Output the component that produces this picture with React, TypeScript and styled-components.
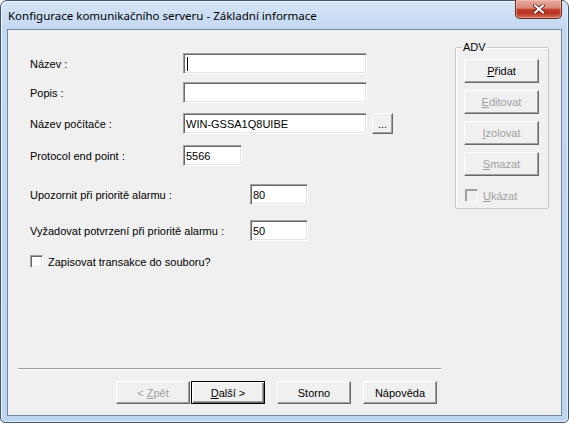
import styled, { createGlobalStyle } from 'styled-components';

const GlobalStyle = createGlobalStyle`
  html, body {
    margin: 0;
    padding: 0;
    background: #ffffff;
  }
  body {
    font-family: "Liberation Sans", Arial, sans-serif;
  }
`;

const Window = styled.div`
  box-sizing: border-box;
  width: 569px;
  height: 423px;
  display: flex;
  flex-direction: column;
  padding: 0 6px 6px 6px;
  border: 1px solid #3e5674;
  border-radius: 7px 7px 5px 5px;
  background: linear-gradient(to bottom, #d6e5f7 0px, #c3d8f1 28px, #bcd4ef 100%);
  box-shadow: inset 1px 1px 0 #eef5fc, inset -1px -1px 0 #e3eefa;
`;

const TitleBar = styled.div`
  height: 28px;
  display: flex;
  align-items: flex-start;
  justify-content: space-between;
`;

const Title = styled.div`
  margin: 7px 0 0 1px;
  font-family: "Noto Sans", "Open Sans", sans-serif;
  font-size: 11.5px;
  line-height: 15px;
  color: #000;
`;

const CloseButton = styled.div`
  width: 45px;
  height: 18px;
  margin: -1px 0 0 0;
  display: flex;
  align-items: center;
  justify-content: center;
  border: 1px solid #6a2a22;
  border-top: none;
  border-radius: 0 0 5px 5px;
  background: linear-gradient(to bottom, #e7ab9f 0%, #d98877 45%, #c2412e 52%, #b8321f 72%, #d2705a 100%);
  box-shadow: inset 0 0 0 1px rgba(255, 210, 200, 0.45);
`;

const Client = styled.div`
  flex: 1;
  display: flex;
  flex-direction: column;
  border: 1px solid #72869f;
  background: #f0f0f0;
  font-size: 11px;
  color: #000;
`;

const Content = styled.div`
  display: flex;
  align-items: flex-start;
`;

const Form = styled.div`
  flex: 1;
  display: flex;
  flex-direction: column;
  padding: 23px 0 0 22px;
`;

const Row = styled.div<{ $gap?: number }>`
  display: flex;
  align-items: center;
  height: 21px;
  margin-top: ${(p) => p.$gap ?? 0}px;
`;

const Label = styled.span<{ $width: number }>`
  width: ${(p) => p.$width}px;
  flex: none;
  white-space: nowrap;
`;

const TextBox = styled.div<{ $width: number }>`
  box-sizing: border-box;
  width: ${(p) => p.$width}px;
  height: 21px;
  display: flex;
  align-items: center;
  padding-left: 2px;
  background: #fff;
  border: 1px solid;
  border-color: #a0a0a0 #ffffff #ffffff #a0a0a0;
  box-shadow: inset 1px 1px 0 #696969, inset -1px -1px 0 #e3e3e3;
  white-space: nowrap;
`;

const Caret = styled.span`
  display: inline-block;
  width: 1px;
  height: 14px;
  margin-left: 1px;
  background: #000;
`;

const Button = styled.div<{ $width?: number; $height?: number; $disabled?: boolean; $default?: boolean }>`
  box-sizing: border-box;
  width: ${(p) => p.$width ?? 75}px;
  height: ${(p) => p.$height ?? 24}px;
  flex: none;
  display: flex;
  align-items: center;
  justify-content: center;
  background: #f0f0f0;
  color: ${(p) => (p.$disabled ? '#a0a0a0' : '#000')};
  border: 1px solid;
  border-color: ${(p) => (p.$default ? '#000' : '#ffffff #696969 #696969 #ffffff')};
  box-shadow: ${(p) =>
    p.$default
      ? 'inset 1px 1px 0 #fff, inset -1px -1px 0 #696969, inset -2px -2px 0 #a0a0a0'
      : 'inset -1px -1px 0 #a0a0a0, inset 1px 1px 0 #f0f0f0'};
  white-space: nowrap;
`;

const CheckRow = styled.label<{ $gap?: number; $disabled?: boolean }>`
  display: flex;
  align-items: center;
  gap: 5px;
  height: 13px;
  margin-top: ${(p) => p.$gap ?? 0}px;
  color: ${(p) => (p.$disabled ? '#a0a0a0' : '#000')};
`;

const CheckBox = styled.span<{ $disabled?: boolean }>`
  box-sizing: border-box;
  width: 13px;
  height: 13px;
  flex: none;
  background: ${(p) => (p.$disabled ? '#f0f0f0' : '#fff')};
  border: 1px solid;
  border-color: #a0a0a0 #ffffff #ffffff #a0a0a0;
  box-shadow: ${(p) => (p.$disabled ? 'inset 1px 1px 0 #a0a0a0' : 'inset 1px 1px 0 #696969, inset -1px -1px 0 #e3e3e3')};
`;

const GroupBox = styled.fieldset`
  box-sizing: border-box;
  width: 94px;
  height: 168px;
  margin: 11px 12px 0 0;
  padding: 5px 8px 0 8px;
  border: 1px solid #c8c8c8;
  border-radius: 2px;
  box-shadow: inset 1px 1px 0 #fff;
  display: flex;
  flex-direction: column;
  gap: 7px;
`;

const Legend = styled.legend`
  padding: 0 1px;
  margin-left: -2px;
  line-height: 13px;
  font-size: 11px;
`;

const Separator = styled.div`
  margin: auto 0 0 10px;
  width: 423px;
  border-top: 1px solid #a0a0a0;
  border-bottom: 1px solid #ffffff;
`;

const ButtonBar = styled.div`
  display: flex;
  gap: 12px;
  padding: 11px 0 11px 108px;
`;

const WizardPair = styled.div`
  display: flex;
  gap: 1px;
`;

export default function App() {
  return (
    <>
      <GlobalStyle />
      <Window>
        <TitleBar>
          <Title>Konfigurace komunikačního serveru - Základní informace</Title>
          <CloseButton>
            <svg width="12" height="10" viewBox="0 0 12 10">
              <path d="M2 1.5 L10 8.5 M10 1.5 L2 8.5" stroke="#5a1e16" strokeWidth="3.6" strokeLinecap="square" />
              <path d="M2 1.5 L10 8.5 M10 1.5 L2 8.5" stroke="#ffffff" strokeWidth="2" strokeLinecap="square" />
            </svg>
          </CloseButton>
        </TitleBar>
        <Client>
          <Content>
            <Form>
              <Row>
                <Label $width={153}>Název :</Label>
                <TextBox $width={184}>
                  <Caret />
                </TextBox>
              </Row>
              <Row $gap={8}>
                <Label $width={153}>Popis :</Label>
                <TextBox $width={184} />
              </Row>
              <Row $gap={10}>
                <Label $width={153}>Název počítače :</Label>
                <TextBox $width={184}>WIN-GSSA1Q8UIBE</TextBox>
                <Button $width={21} $height={21} style={{ marginLeft: 5 }}>
                  ...
                </Button>
              </Row>
              <Row $gap={11}>
                <Label $width={153}>Protocol end point :</Label>
                <TextBox $width={59}>5566</TextBox>
              </Row>
              <Row $gap={18}>
                <Label $width={220}>Upozornit při prioritě alarmu :</Label>
                <TextBox $width={58}>80</TextBox>
              </Row>
              <Row $gap={15}>
                <Label $width={220}>Vyžadovat potvrzení při prioritě alarmu :</Label>
                <TextBox $width={58}>50</TextBox>
              </Row>
              <CheckRow $gap={14}>
                <CheckBox />
                Zapisovat transakce do souboru?
              </CheckRow>
            </Form>
            <GroupBox>
              <Legend>ADV</Legend>
              <Button>
                <u>P</u>řidat
              </Button>
              <Button $disabled>
                <u>E</u>ditovat
              </Button>
              <Button $disabled>
                <u>I</u>zolovat
              </Button>
              <Button $disabled>
                <u>S</u>mazat
              </Button>
              <CheckRow $disabled $gap={6} style={{ marginLeft: 1 }}>
                <CheckBox $disabled />
                <span>
                  <u>U</u>kázat
                </span>
              </CheckRow>
            </GroupBox>
          </Content>
          <Separator />
          <ButtonBar>
            <WizardPair>
              <Button $width={74} $height={23} $disabled>
                &lt;&nbsp;<u>Z</u>pět
              </Button>
              <Button $width={74} $height={23} $default>
                <u>D</u>alší &gt;
              </Button>
            </WizardPair>
            <Button $width={74} $height={23}>
              Storno
            </Button>
            <Button $width={74} $height={23}>
              Nápověda
            </Button>
          </ButtonBar>
        </Client>
      </Window>
    </>
  );
}
